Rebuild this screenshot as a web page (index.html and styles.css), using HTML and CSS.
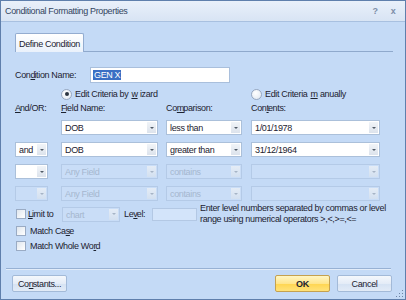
FILE: index.html
```html
<!doctype html>
<html lang="en">
<head>
  <meta charset="utf-8">
  <title>Conditional Formatting Properties</title>
  <link rel="stylesheet" href="styles.css">
</head>
<body>
  <div class="dialog">
    <div class="titlebar">
      <span class="title">Conditional Formatting Properties</span>
      <span class="tbtn">?</span>
      <span class="tbtn">x</span>
    </div>

    <div class="main">
      <div class="tabstrip">
        <div class="tab">Define Condition</div>
      </div>

      <div class="namerow">
        <span class="namelabel">Con<u>d</u>ition Name:</span>
        <div class="textbox"><span class="sel">GEN X</span></div>
      </div>

      <div class="grid">
        <div class="cell c2 radiorow"><span class="radio on"></span>Edit Criteria by <u>w</u>izard</div>
        <div class="cell c4 radiorow"><span class="radio"></span>Edit Criteria <u>m</u>anually</div>

        <div class="cell c1 head"><u>A</u>nd/OR:</div>
        <div class="cell c2 head"><u>F</u>ield Name:</div>
        <div class="cell c3 head">Co<u>m</u>parison:</div>
        <div class="cell c4 head">Con<u>t</u>ents:</div>

        <div class="cell c2"><div class="combo w-field"><span class="val">DOB</span><span class="arrow"></span></div></div>
        <div class="cell c3"><div class="combo w-comp"><span class="val">less than</span><span class="arrow"></span></div></div>
        <div class="cell c4"><div class="combo w-cont"><span class="val">1/01/1978</span><span class="arrow"></span></div></div>

        <div class="cell c1"><div class="combo w-and"><span class="val">and</span><span class="arrow"></span></div></div>
        <div class="cell c2"><div class="combo w-field"><span class="val">DOB</span><span class="arrow"></span></div></div>
        <div class="cell c3"><div class="combo w-comp"><span class="val">greater than</span><span class="arrow"></span></div></div>
        <div class="cell c4"><div class="combo w-cont"><span class="val">31/12/1964</span><span class="arrow"></span></div></div>

        <div class="cell c1"><div class="combo w-and"><span class="val"></span><span class="arrow"></span></div></div>
        <div class="cell c2"><div class="combo dis w-field"><span class="val">Any Field</span><span class="arrow"></span></div></div>
        <div class="cell c3"><div class="combo dis w-comp"><span class="val">contains</span><span class="arrow"></span></div></div>
        <div class="cell c4"><div class="combo dis w-cont"><span class="val"></span><span class="arrow"></span></div></div>

        <div class="cell c1"><div class="combo dis w-and"><span class="val"></span><span class="arrow"></span></div></div>
        <div class="cell c2"><div class="combo dis w-field"><span class="val">Any Field</span><span class="arrow"></span></div></div>
        <div class="cell c3"><div class="combo dis w-comp"><span class="val">contains</span><span class="arrow"></span></div></div>
        <div class="cell c4"><div class="combo dis w-cont"><span class="val"></span><span class="arrow"></span></div></div>
      </div>

      <div class="limitrow">
        <span class="check"></span>
        <span class="limitlabel"><u>L</u>imit to</span>
        <div class="combo dis w-chart"><span class="val">chart</span><span class="arrow"></span></div>
        <span class="levellabel">Le<u>v</u>el:</span>
        <div class="levelbox"></div>
        <div class="hint">Enter level numbers separated by commas or level<br>range using numerical operators &gt;,&lt;,&gt;=,&lt;=</div>
      </div>
      <div class="checkrow"><span class="check"></span>Match Ca<u>s</u>e</div>
      <div class="checkrow"><span class="check"></span>Match Whole Wo<u>r</u>d</div>
    </div>

    <div class="footer">
      <div class="sep"></div>
      <div class="buttons">
        <div class="btn">Co<u>n</u>stants...</div>
        <div class="spacer"></div>
        <div class="btn ok">OK</div>
        <div class="btn">Cancel</div>
      </div>
    </div>

    <div class="grip"></div>
  </div>
</body>
</html>
```

FILE: styles.css
```css
body{
    margin: 0;
    font-family: "Liberation Sans", Arial, sans-serif;
    font-size: 9px;
    letter-spacing: -0.35px;
    color: #1c2230;
}
u{
    margin-right: -0.7px;
}
.dialog{
    width: 406px;
    height: 300px;
    box-sizing: border-box;
    border: 1px solid #5f7fac;
    background: #c4daf6;
    display: flex;
    flex-direction: column;
    position: relative;
}
.titlebar{
    height: 20px;
    background: linear-gradient(#e9f0fa, #d8e4f4);
    border-bottom: 1px solid #a8c0e0;
    display: flex;
    align-items: center;
    padding: 0 5px 0 4px;
    color: #34455f;
}
.title{
    flex: 1;
}
.tbtn{
    width: 14px;
    text-align: center;
    margin-left: 4px;
    color: #7c8ea8;
    font-weight: bold;
}
.main{
    flex: 1;
    padding: 11px 12px 0 14px;
}
.tabstrip{
    display: flex;
    border-bottom: 1px solid #8fa9cc;
    height: 18px;
}
.tab{
    height: 19px;
    box-sizing: border-box;
    border: 1px solid #93acd0;
    border-bottom: none;
    border-radius: 2px 2px 0 0;
    background: linear-gradient(#ffffff, #eaf1fb);
    padding: 5px 3px 0 3px;
    margin-bottom: -1px;
    white-space: nowrap;
}
.namerow{
    display: flex;
    align-items: center;
    margin-top: 15px;
}
.namelabel{
    width: 75px;
}
.textbox{
    width: 140px;
    height: 16px;
    box-sizing: border-box;
    border: 1px solid #a9bfdc;
    background: #fff;
    padding: 2px 0 0 2px;
}
.sel{
    background: #3a6fc4;
    color: #fff;
    padding: 0 1px;
}
.grid{
    display: grid;
    grid-template-columns: 46px 105px 85px 129px;
    grid-template-rows: 12px 20px 22px 22px 22px 15px;
    margin-top: 5px;
}
.grid .radiorow{
    grid-row: 1;
}
.grid .head{
    grid-row: 2;
    padding-bottom: 4px;
}
.c1{ grid-column: 1; }
.c2{ grid-column: 2; }
.c3{ grid-column: 3; }
.c4{ grid-column: 4; }
.cell{
    display: flex;
    align-items: flex-start;
}
.radiorow,
.grid .head{
    align-items: center;
}
.radiorow{
    gap: 3px;
}
.radio{
    width: 9px;
    height: 9px;
    border-radius: 50%;
    border: 1px solid #98a8c0;
    background: radial-gradient(circle at 40% 35%, #ffffff, #dde5ef);
    position: relative;
}
.radio.on::after{
    content: "";
    position: absolute;
    left: 2.5px;
    top: 2.5px;
    width: 4px;
    height: 4px;
    border-radius: 50%;
    background: #2b3440;
}
.combo{
    display: flex;
    height: 15px;
    box-sizing: border-box;
    border: 1px solid #abc0da;
    background: #fff;
}
.combo .val{
    flex: 1;
    padding: 2px 0 0 3px;
    white-space: nowrap;
    overflow: hidden;
}
.combo .arrow{
    width: 9px;
    margin: 1px;
    background: linear-gradient(#f1f4f8, #dce3ec);
    display: flex;
    align-items: center;
    justify-content: center;
}
.combo .arrow::after{
    content: "";
    border-top: 2px solid #505a66;
    border-left: 2px solid transparent;
    border-right: 2px solid transparent;
}
.combo.dis{
    background: #c9ddf7;
    border-color: #b4cae7;
    color: #a5b7cf;
}
.combo.dis .arrow{
    background: linear-gradient(#e4ecf6, #d3e0f0);
}
.combo.dis .arrow::after{
    border-top-color: #a6b4c6;
}
.w-and{ width: 33px; }
.w-field{ width: 97px; }
.w-comp{ width: 76px; }
.w-cont{ width: 129px; }
.w-chart{ width: 58px; }
.limitrow{
    display: flex;
    align-items: center;
    margin-top: 2px;
    height: 22px;
}
.check{
    width: 8px;
    height: 8px;
    border: 1px solid #9aabc4;
    background: linear-gradient(135deg, #dfe6ee, #ffffff);
    margin: 0 2px 0 1px;
    flex: none;
}
.limitlabel{
    width: 34px;
}
.levellabel{
    margin-left: 4px;
    width: 28px;
}
.levelbox{
    width: 45px;
    height: 13px;
    box-sizing: border-box;
    border: 1px solid #b3c8e4;
    background: #d3e4fa;
}
.hint{
    margin-left: 3px;
    line-height: 11px;
    white-space: nowrap;
}
.checkrow{
    display: flex;
    align-items: center;
    height: 12px;
    margin-top: 3px;
}
.checkrow .check{
    margin-right: 4px;
}
.limitrow + .checkrow{
    margin-top: 0;
}
.footer{
    padding: 0 13px 7px 11px;
}
.sep{
    height: 1px;
    background: #97b1d4;
    border-bottom: 1px solid #e2ecf9;
    margin: 0 1px 5px -6px;
}
.buttons{
    display: flex;
    gap: 7px;
}
.spacer{
    flex: 1;
}
.btn{
    width: 55px;
    height: 17px;
    box-sizing: border-box;
    border: 1px solid #a3bad8;
    border-radius: 2px;
    background: linear-gradient(#f5f8fc 0%, #e4ecf7 50%, #d5e2f3 51%, #e2ebf7 100%);
    display: flex;
    align-items: center;
    justify-content: center;
}
.btn.ok{
    border-color: #c4a150;
    background: linear-gradient(#fff6c4 0%, #ffe58c 50%, #ffd54f 51%, #ffe27a 100%);
    font-weight: bold;
}
.grip{
    position: absolute;
    right: 2px;
    bottom: 2px;
    width: 8px;
    height: 8px;
    background:
        radial-gradient(circle, #6f86a6 0.8px, transparent 1px) 0 0 / 3px 3px;
    clip-path: polygon(100% 0, 100% 100%, 0 100%);
}
```
